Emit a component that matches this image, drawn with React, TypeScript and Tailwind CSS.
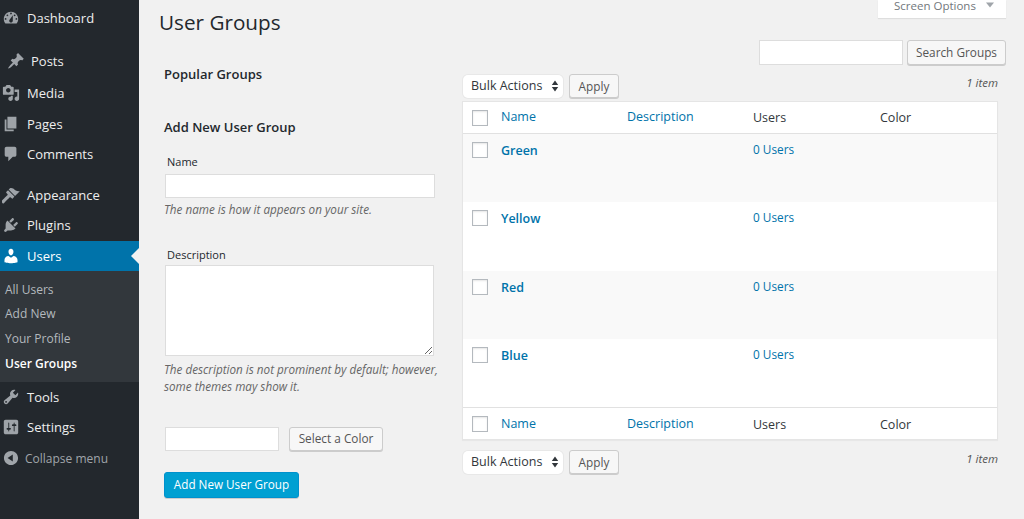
import type { ReactNode } from "react";

const icons = {
  dashboard:
    "M3.76 16h12.48c1.1-1.37 1.76-3.11 1.76-5 0-4.42-3.58-8-8-8s-8 3.58-8 8c0 1.89.66 3.63 1.76 5zM10 4c.55 0 1 .45 1 1s-.45 1-1 1-1-.45-1-1 .45-1 1-1zM6 6c.55 0 1 .45 1 1s-.45 1-1 1-1-.45-1-1 .45-1 1-1zm8 0c.55 0 1 .45 1 1s-.45 1-1 1-1-.45-1-1 .45-1 1-1zm-5.37 5.55L12 7v6c0 1.1-.9 2-2 2s-2-.9-2-2c0-.57.24-1.08.63-1.45zM4 10c.55 0 1 .45 1 1s-.45 1-1 1-1-.45-1-1 .45-1 1-1zm12 0c.55 0 1 .45 1 1s-.45 1-1 1-1-.45-1-1 .45-1 1-1z",
  post:
    "M10.44 3.02l1.82-1.82 6.36 6.35-1.83 1.82c-1.05-.68-2.48-.57-3.41.36l-.75.75c-.92.93-1.04 2.35-.35 3.41l-1.83 1.82-2.41-2.41-2.8 2.79c-.42.42-3.38 2.71-3.8 2.29s1.86-3.39 2.28-3.81l2.79-2.79L4.1 9.36l1.83-1.82c1.05.69 2.48.57 3.4-.36l.75-.75c.93-.92 1.05-2.35.36-3.41z",
  media:
    "M13 11V4c0-.55-.45-1-1-1h-1.67L9 1H5L3.67 3H2c-.55 0-1 .45-1 1v7c0 .55.45 1 1 1h10c.55 0 1-.45 1-1zM7 4.5c1.38 0 2.5 1.12 2.5 2.5S8.38 9.5 7 9.5 4.5 8.38 4.5 7 5.62 4.5 7 4.5zM14 6h5v10.5c0 1.38-1.12 2.5-2.5 2.5S14 17.88 14 16.5s1.12-2.5 2.5-2.5c.17 0 .34.02.5.05V9h-3V6zm-4 8.05V13h2v3.5c0 1.38-1.12 2.5-2.5 2.5S7 17.88 7 16.5 8.12 14 9.5 14c.17 0 .34.02.5.05z",
  pages: "M6 15V2h10v13H6zm-1 1h8v2H3V5h2v11z",
  comments:
    "M5 2h9c1.1 0 2 .9 2 2v7c0 1.1-.9 2-2 2h-2l-5 5v-5H5c-1.1 0-2-.9-2-2V4c0-1.1.9-2 2-2z",
  appearance:
    "M14.48 11.06L7.41 3.99l1.5-1.5c.5-.56 2.3-.47 3.51.32 1.21.8 1.43 1.28 2.91 2.1 1.18.64 2.45 1.26 4.45.85zm-.71.71L6.7 4.7 4.93 6.47c-.39.39-.39 1.02 0 1.41l1.06 1.06c.39.39.39 1.03 0 1.42-.6.6-6.4 6.25-6.4 6.25-.39.39-.39 1.02 0 1.41l1.06 1.06c.39.39 1.02.39 1.41 0 0 0 5.64-5.8 6.25-6.4.39-.39 1.02-.39 1.41 0l1.06 1.06c.39.39 1.02.39 1.41 0z",
  plugins:
    "M13.11 4.36L9.87 7.6 8 5.73l3.24-3.24c.35-.34 1.05-.2 1.56.32.52.51.66 1.21.31 1.55zm-8 1.77l.91-1.12 9.01 9.01-1.19.84c-.71.71-2.63 1.16-3.82 1.16H6.14L4.9 17.26c-.59.59-1.54.59-2.12 0-.59-.58-.59-1.53 0-2.12l1.24-1.24v-3.88c0-1.13.4-3.19 1.09-3.89zm7.26 3.97l3.24-3.24c.34-.35 1.04-.21 1.55.31.52.51.66 1.21.31 1.55l-3.24 3.25z",
  users:
    "M10 9.25c-2.27 0-2.73-3.44-2.73-3.44C7 4.02 7.82 2 9.97 2c2.16 0 2.98 2.02 2.71 3.81 0 0-.41 3.44-2.68 3.44zm0 2.57L12.72 10c2.39 0 4.52 2.33 4.52 4.53v2.49s-3.65 1.13-7.24 1.13c-3.65 0-7.24-1.13-7.24-1.13v-2.49c0-2.25 1.94-4.48 4.47-4.48z",
  tools:
    "M16.68 9.77c-1.34 1.34-3.3 1.67-4.95.99l-5.41 6.52c-.99.99-2.59.99-3.58 0s-.99-2.59 0-3.57l6.52-5.42c-.68-1.65-.35-3.61.99-4.95 1.28-1.28 3.12-1.62 4.72-1.06l-2.89 2.89 2.82 2.82 2.86-2.87c.53 1.58.18 3.39-1.08 4.65zM3.81 16.21c.4.39 1.04.39 1.43 0 .4-.4.4-1.04 0-1.43-.39-.4-1.03-.4-1.43 0-.39.39-.39 1.03 0 1.43z",
  settings:
    "M18 16V4c0-1.1-.9-2-2-2H4c-1.1 0-2 .9-2 2v12c0 1.1.9 2 2 2h12c1.1 0 2-.9 2-2zM8 11h1c.55 0 1 .45 1 1s-.45 1-1 1H8v1.5c0 .28-.22.5-.5.5s-.5-.22-.5-.5V13H6c-.55 0-1-.45-1-1s.45-1 1-1h1V5.5c0-.28.22-.5.5-.5s.5.22.5.5V11zm5-2h-1c-.55 0-1-.45-1-1s.45-1 1-1h1V5.5c0-.28.22-.5.5-.5s.5.22.5.5V7h1c.55 0 1 .45 1 1s-.45 1-1 1h-1v5.5c0 .28-.22.5-.5.5s-.5-.22-.5-.5V9z",
  collapse:
    "M10 2.16c4.33 0 7.84 3.51 7.84 7.84s-3.51 7.84-7.84 7.84S2.16 14.33 2.16 10 5.71 2.16 10 2.16zm2 11.72V6.12L6.18 9.97z",
};

function Dashicon({ d, className }: { d: string; className: string }) {
  return (
    <svg viewBox="0 0 20 20" fill="currentColor" className={className}>
      <path d={d} />
    </svg>
  );
}

function MenuItem({
  icon,
  label,
  className = "",
}: {
  icon: string;
  label: string;
  className?: string;
}) {
  return (
    <div className={`flex h-[30px] items-center pl-[2px] text-[13px] text-[#eeeeee] ${className}`}>
      <Dashicon d={icon} className="mr-[7px] h-[18px] w-[18px] text-[#9ea3a8]" />
      <span className="pt-[2px]">{label}</span>
    </div>
  );
}

function Sidebar() {
  return (
    <aside className="h-[519px] w-[139px] shrink-0 bg-[#23282d]">
      <div className="pt-[3px]">
        <MenuItem icon={icons.dashboard} label="Dashboard" />
      </div>
      <div className="mt-[13px] flex h-[30px] items-center pl-[7px] text-[13px] text-[#eeeeee]">
        <Dashicon d={icons.post} className="mr-[6px] h-[18px] w-[18px] text-[#9ea3a8]" />
        <span className="pt-[2px]">Posts</span>
      </div>
      <MenuItem icon={icons.media} label="Media" className="mt-[2px]" />
      <MenuItem icon={icons.pages} label="Pages" className="mt-[1px]" />
      <MenuItem icon={icons.comments} label="Comments" />
      <MenuItem icon={icons.appearance} label="Appearance" className="mt-[11px]" />
      <MenuItem icon={icons.plugins} label="Plugins" />
      <div className="relative mt-[1px] flex h-[30px] items-center bg-[#0073aa] pl-[2px] text-[13px] text-white">
        <Dashicon d={icons.users} className="mr-[7px] h-[18px] w-[18px] text-white" />
        <span className="pt-[2px]">Users</span>
        <div className="absolute right-0 top-[7px] border-y-[8px] border-r-[8px] border-y-transparent border-r-[#f1f1f1]" />
      </div>
      <div className="h-[111px] bg-[#32373c] pt-[7px] pl-[5px] text-[12px] text-[#b4b9be]">
        <div className="flex h-[24px] items-center">All Users</div>
        <div className="flex h-[24px] items-center">Add New</div>
        <div className="mt-[1px] flex h-[24px] items-center">Your Profile</div>
        <div className="mt-[1px] flex h-[24px] items-center font-semibold text-white">User Groups</div>
      </div>
      <MenuItem icon={icons.tools} label="Tools" />
      <MenuItem icon={icons.settings} label="Settings" />
      <div className="mt-[1px] flex h-[30px] items-center pl-[2px] text-[12px] text-[#a0a5aa]">
        <Dashicon d={icons.collapse} className="mr-[5px] h-[18px] w-[18px]" />
        <span className="pt-[2px]">Collapse menu</span>
      </div>
    </aside>
  );
}

function Button({ children, className = "" }: { children: ReactNode; className?: string }) {
  return (
    <button
      className={`rounded-[3px] border border-[#cccccc] bg-[#f7f7f7] text-[11.8px] text-[#555555] shadow-[0_1px_0_#cccccc] ${className}`}
    >
      {children}
    </button>
  );
}

function Checkbox() {
  return (
    <span className="block h-4 w-4 border border-[#b4b9be] bg-white shadow-[inset_0_1px_2px_rgba(0,0,0,0.1)]" />
  );
}

function BulkBar({ className = "" }: { className?: string }) {
  return (
    <div className={`flex items-center pr-2 ${className}`}>
      <div className="ml-[1px] flex h-[23px] w-[100px] items-center justify-between rounded-[5px] bg-white pl-2 pr-[4px] text-[12.5px] text-[#32373c] shadow-[0_0_0_1px_#e8e8e8]">
        <span>Bulk Actions</span>
        <svg viewBox="0 0 8 12" className="h-3 w-2 text-[#32373c]" fill="currentColor">
          <path d="M4 0.5 7.2 5H0.8zM4 11.5 0.8 7h6.4z" />
        </svg>
      </div>
      <Button className="ml-[6px] h-[24px] w-[50px] pt-[1px]">Apply</Button>
      <span className="mb-[6px] ml-auto text-[11.5px] italic text-[#555555]">1 item</span>
    </div>
  );
}

const columnLink = "text-[12.5px] text-[#0073aa]";
const columnPlain = "pt-[2px] text-[12.5px] text-[#32373c]";

function TableHeading({ border }: { border: string }) {
  return (
    <div className={`grid h-[32px] grid-cols-[38px_126px_126px_127px_1fr] items-center ${border}`}>
      <span className="pl-[9px]">
        <Checkbox />
      </span>
      <span className={columnLink}>Name</span>
      <span className={columnLink}>Description</span>
      <span className={columnPlain}>Users</span>
      <span className={columnPlain}>Color</span>
    </div>
  );
}

const groups = ["Green", "Yellow", "Red", "Blue"];

function GroupsTable() {
  return (
    <div className="mr-2 mt-[3px] border border-[#e5e5e5] bg-white shadow-[0_1px_1px_rgba(0,0,0,0.04)]">
      <TableHeading border="border-b border-[#e1e1e1]" />
      {groups.map((name, i) => (
        <div
          key={name}
          className={`grid h-[68.25px] grid-cols-[38px_126px_126px_127px_1fr] pt-[8px] ${
            i % 2 === 0 ? "bg-[#f9f9f9]" : "bg-white"
          }`}
        >
          <span className="pl-[9px]">
            <Checkbox />
          </span>
          <span className="pt-[1px] text-[12.5px] font-semibold leading-[16px] text-[#0073aa]">{name}</span>
          <span />
          <span className="text-[11.8px] leading-[14px] text-[#0073aa]">0 Users</span>
          <span />
        </div>
      ))}
      <TableHeading border="border-t border-[#e1e1e1] pt-[1px]" />
    </div>
  );
}

function AddGroupForm() {
  return (
    <div className="ml-[5px] w-[277px] shrink-0 text-[#444444]">
      <h2 className="mt-[25px] text-[13px] font-semibold leading-[18px] text-[#23282d]">Popular Groups</h2>
      <h2 className="mt-[35px] text-[13px] font-semibold leading-[18px] text-[#23282d]">Add New User Group</h2>

      <label className="mt-[18px] block pl-[3px] text-[11px] leading-[16px] text-[#23282d]">Name</label>
      <input className="mt-[4px] ml-[1px] block h-[24px] w-[270px] border border-[#dddddd] bg-white" />
      <p className="mt-[3px] text-[11.7px] italic leading-[17px] text-[#666666]">
        The name is how it appears on your site.
      </p>

      <label className="mt-[29px] block pl-[3px] text-[11px] leading-[16px] text-[#23282d]">Description</label>
      <textarea className="mt-[2px] ml-[1px] block h-[91px] w-[269px] border border-[#dddddd] bg-white" />
      <p className="mt-[5px] w-[280px] text-[11.7px] italic leading-[17px] text-[#666666]">
        The description is not prominent by default; however, some themes may show it.
      </p>

      <div className="mt-[32px] ml-[1px] flex">
        <input className="h-[24px] w-[114px] border border-[#dddddd] bg-white" />
        <Button className="ml-[10px] h-[24px] w-[94px]">Select a Color</Button>
      </div>
      <button className="mt-[21px] h-[26px] w-[135px] rounded-[3px] border border-[#0091cd] bg-[#00a0d2] text-[11.7px] text-white shadow-[0_1px_0_rgba(0,0,0,0.15)]">
        Add New User Group
      </button>
    </div>
  );
}

export default function App() {
  return (
    <div
      className="flex h-[519px] w-[1024px] overflow-hidden bg-[#f1f1f1]"
      style={{ fontFamily: '"Open Sans", sans-serif' }}
    >
      <Sidebar />
      <main className="min-w-0 flex-1">
        <div className="flex h-[40px] items-start justify-between pl-5 pr-[18px]">
          <h1 className="mt-[5px] text-[20.7px] leading-[34px] text-[#23282d]">User Groups</h1>
          <div className="flex h-[18px] w-[128px] items-start gap-[10px] bg-white pl-[16px] text-[11.5px] leading-[11px] text-[#72777c] shadow-[0_1px_1px_rgba(0,0,0,0.08)]">
            <span>Screen Options</span>
            <svg viewBox="0 0 10 6" className="mt-[2px] h-[6px] w-[8px]" fill="#a0a5aa">
              <path d="M0 0h10L5 6z" />
            </svg>
          </div>
        </div>
        <div className="flex pr-[18px] pl-5">
          <AddGroupForm />
          <div className="ml-[21px] min-w-0 flex-1">
            <div className="flex justify-end">
              <input className="h-[25px] w-[144px] border border-[#dddddd] bg-white" />
              <Button className="ml-1 h-[25px] w-[99px]">Search Groups</Button>
            </div>
            <BulkBar className="mt-[9px]" />
            <GroupsTable />
            <BulkBar className="mt-[10px]" />
          </div>
        </div>
      </main>
    </div>
  );
}
